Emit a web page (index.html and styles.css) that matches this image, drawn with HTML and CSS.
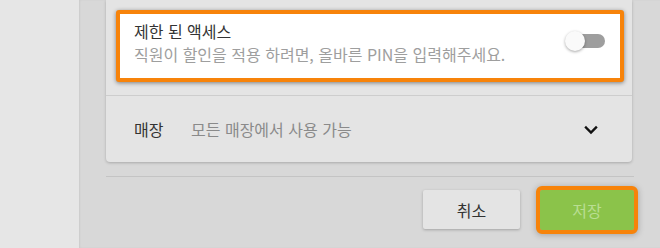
FILE: index.html
```html
<!DOCTYPE html>
<html lang="ko">
<head>
<meta charset="utf-8">
<link rel="stylesheet" href="styles.css">
</head>
<body>
<div class="app">
  <aside class="side"></aside>
  <main class="main">
    <section class="card">
      <div class="section-access">
        <div class="highlight">
          <div class="texts">
            <div class="title">제한 된 액세스</div>
            <div class="desc">직원이 할인을 적용 하려면, 올바른 PIN을 입력해주세요.</div>
          </div>
          <div class="switch">
            <div class="track"></div>
            <div class="thumb"></div>
          </div>
        </div>
      </div>
      <div class="row-store">
        <span class="label">매장</span>
        <span class="value">모든 매장에서 사용 가능</span>
        <svg class="chev" width="14" height="10" viewBox="0 0 14 10"><polyline points="2,2.5 7,7.5 12,2.5" fill="none" stroke="#111" stroke-width="2.4" stroke-linecap="square"/></svg>
      </div>
    </section>
    <div class="footer">
      <button class="btn cancel">취소</button>
      <button class="btn save">저장</button>
    </div>
  </main>
</div>
</body>
</html>
```

FILE: styles.css
```css
* { box-sizing: border-box; }
html, body { margin: 0; padding: 0; }
body {
  width: 660px;
  height: 248px;
  overflow: hidden;
  font-family: "Noto Sans CJK KR", "Noto Sans", sans-serif;
  font-size: 16px;
}
.app {
  display: flex;
  height: 248px;
}
.side {
  width: 79px;
  flex: none;
  background: #e6e6e6;
}
.main {
  flex: 1;
  background: #d8d8d8;
  padding: 0 27px 0 27px;
  box-shadow: inset 1px 0 2px rgba(0,0,0,0.06);
}
.card {
  width: 526px;
  background: #e4e4e4;
  border-radius: 0 0 4px 4px;
  box-shadow: 0 1px 3px rgba(0,0,0,0.22);
}
.section-access {
  padding: 10px 8px 13px 10px;
  border-bottom: 1px solid #cdcdcd;
}
.highlight {
  display: flex;
  align-items: center;
  background: #fff;
  border: 4px solid #f7830a;
  border-radius: 3px;
  box-shadow: 0 1px 4px rgba(0,0,0,0.45);
  padding: 6px 15px 12px 14px;
  height: 72px;
}
.texts { flex: 1; }
.title {
  color: #333;
  line-height: 23px;
}
.desc {
  color: #9e9e9e;
  line-height: 23px;
}
.switch {
  position: relative;
  width: 40px;
  height: 22px;
  margin-top: -5px;
}
.track {
  position: absolute;
  left: 6px;
  top: 4px;
  width: 34px;
  height: 14px;
  border-radius: 7px;
  background: #9e9e9e;
}
.thumb {
  position: absolute;
  left: 0;
  top: 1px;
  width: 20px;
  height: 20px;
  border-radius: 50%;
  background: #fafafa;
  box-shadow: 0 1px 3px rgba(0,0,0,0.35);
}
.row-store {
  display: flex;
  align-items: center;
  height: 66px;
  padding: 0 34px 0 28px;
}
.label {
  color: #333;
  width: 57px;
}
.value {
  color: #8a8a8a;
  flex: 1;
}
.chev { display: block; margin-top: 2px; }
.footer {
  margin-top: 14px;
  border-top: 1px solid #c4c4c4;
  padding-top: 13px;
  padding-right: 0;
  display: flex;
  justify-content: flex-end;
  gap: 20px;
  width: 528px;
}
.btn {
  font-family: "Noto Sans CJK KR", "Noto Sans", sans-serif;
  font-size: 16px;
  height: 40px;
  border: none;
  border-radius: 2px;
  padding: 0;
}
.cancel {
  width: 97px;
  height: 39px;
  background: #e4e4e4;
  color: #333;
  box-shadow: 0 1px 3px rgba(0,0,0,0.25);
}
.save {
  width: 94px;
  background: #8bc34a;
  color: #b9de92;
  outline: 4px solid #f7830a;
  box-shadow: 0 1px 6px 4px rgba(0,0,0,0.25);
}
```
